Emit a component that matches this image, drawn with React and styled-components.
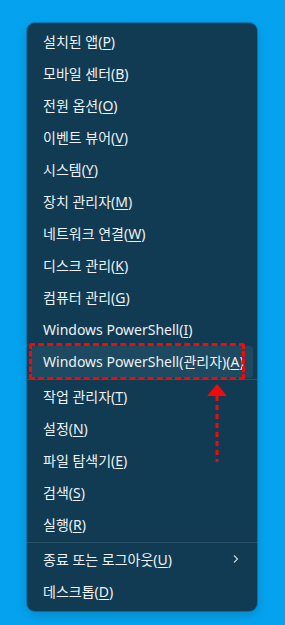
import React from 'react';
import styled, { createGlobalStyle } from 'styled-components';

const GlobalStyle = createGlobalStyle`
  html, body {
    margin: 0;
    padding: 0;
    background: #05a3ef;
  }
  body {
    font-family: "Noto Sans", "Noto Sans CJK KR", sans-serif;
  }
`;

const groups = [
  [
    ['설치된 앱', 'P'],
    ['모바일 센터', 'B'],
    ['전원 옵션', 'O'],
    ['이벤트 뷰어', 'V'],
    ['시스템', 'Y'],
    ['장치 관리자', 'M'],
    ['네트워크 연결', 'W'],
    ['디스크 관리', 'K'],
    ['컴퓨터 관리', 'G'],
    ['Windows PowerShell', 'I'],
    ['Windows PowerShell(관리자)', 'A', 'active'],
  ],
  [
    ['작업 관리자', 'T'],
    ['설정', 'N'],
    ['파일 탐색기', 'E'],
    ['검색', 'S'],
    ['실행', 'R'],
  ],
  [
    ['종료 또는 로그아웃', 'U', 'sub'],
    ['데스크톱', 'D'],
  ],
];

const Screen = styled.div`
  position: relative;
  width: 285px;
  height: 625px;
  padding: 23px 0 0 27px;
  box-sizing: border-box;
`;

const Menu = styled.div`
  width: 230px;
  box-sizing: border-box;
  padding: 3px 0 3px;
  background: #103b53;
  border-radius: 8px;
  box-shadow: 0 0 0 1px rgba(0, 60, 100, 0.35), 0 4px 12px rgba(0, 0, 0, 0.18);
`;

const Item = styled.div`
  height: 32px;
  margin: 0 4px;
  padding: 0 12px 2px;
  box-sizing: border-box;
  display: flex;
  align-items: center;
  justify-content: space-between;
  border-radius: 4px;
  background: ${p => (p.$active ? '#1d4961' : 'transparent')};
  color: #eef1f3;
  font-size: 14px;
  white-space: nowrap;
`;

const Key = styled.u`
  text-decoration-thickness: 1px;
  text-underline-offset: 2px;
`;

const Separator = styled.div`
  height: 1px;
  margin: 1px 0;
  background: #2b5267;
`;

const Chevron = styled.svg`
  width: 10px;
  height: 10px;
`;

const Highlight = styled.div`
  position: absolute;
  left: 29px;
  top: 343px;
  width: 216px;
  height: 37px;
  box-sizing: border-box;
  border: 3px dashed #f00a0a;
  border-radius: 3px;
`;

const Arrow = styled.svg`
  position: absolute;
  left: 205px;
  top: 383px;
`;

export default function App() {
  return (
    <>
      <GlobalStyle />
      <Screen>
        <Menu>
          {groups.map((group, gi) => (
            <React.Fragment key={gi}>
              {gi > 0 && <Separator />}
              {group.map(([label, key, flag]) => (
                <Item key={label} $active={flag === 'active'}>
                  <span>
                    {label}(<Key>{key}</Key>)
                  </span>
                  {flag === 'sub' && (
                    <Chevron viewBox="0 0 10 10">
                      <path d="M3 1.5 L6.5 5 L3 8.5" fill="none" stroke="#c9d3d9" strokeWidth="1.2" />
                    </Chevron>
                  )}
                </Item>
              ))}
            </React.Fragment>
          ))}
        </Menu>
        <Highlight />
        <Arrow width="24" height="80" viewBox="0 0 24 80">
          <polygon points="12,1 22,13 2,13" fill="#f00a0a" />
          <line x1="12" y1="13" x2="12" y2="79" stroke="#f00a0a" strokeWidth="3" strokeDasharray="5 4" />
        </Arrow>
      </Screen>
    </>
  );
}
